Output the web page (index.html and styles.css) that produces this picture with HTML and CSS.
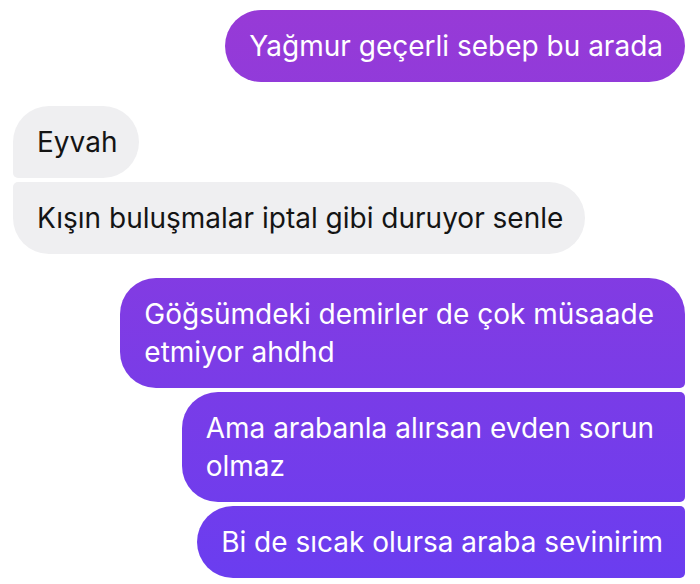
FILE: index.html
```html
<!DOCTYPE html>
<html lang="tr">
<head>
<meta charset="utf-8">
<link rel="stylesheet" href="styles.css">
</head>
<body>
<div class="chat">
  <div class="group me">
    <div class="bubble solo">Yağmur geçerli sebep bu arada</div>
  </div>
  <div class="group them">
    <div class="bubble first">Eyvah</div>
    <div class="bubble last">Kışın buluşmalar iptal gibi duruyor senle</div>
  </div>
  <div class="group me">
    <div class="bubble first wrap">Göğsümdeki demirler de çok müsaade<br>etmiyor ahdhd</div>
    <div class="bubble mid wrap">Ama arabanla alırsan evden sorun<br>olmaz</div>
    <div class="bubble last">Bi de sıcak olursa araba sevinirim</div>
  </div>
</div>
</body>
</html>
```
FILE: styles.css
```css
* { box-sizing: border-box; }
html, body { margin: 0; padding: 0; background: #ffffff; }
body { width: 700px; height: 584px; overflow: hidden; }
.chat {
  display: flex;
  flex-direction: column;
  gap: 24px;
  padding: 10px 15px 0 13px;
  font-family: Inter, "Noto Sans", sans-serif;
  font-size: 28px;
  line-height: 38px;
}
.group {
  display: flex;
  flex-direction: column;
  gap: 4px;
}
.group.me { align-items: flex-end; }
.group.them { align-items: flex-start; }
.bubble {
  padding: 17px 22px 17px 24px;
  border-radius: 36px;
  white-space: nowrap;
}
.bubble.wrap { padding-right: 31px; }
.me .bubble {
  color: #ffffff;
  background: linear-gradient(180deg, #983ad6 0px, #6a3df0 584px) fixed;
}
.them .bubble {
  color: #141414;
  background: #efeff1;
}
.them .first { border-bottom-left-radius: 5px; }
.them .last { border-top-left-radius: 5px; }
.me .first { border-bottom-right-radius: 5px; }
.me .mid { border-top-right-radius: 5px; border-bottom-right-radius: 5px; }
.me .last { border-top-right-radius: 5px; border-bottom-right-radius: 5px; }
```
